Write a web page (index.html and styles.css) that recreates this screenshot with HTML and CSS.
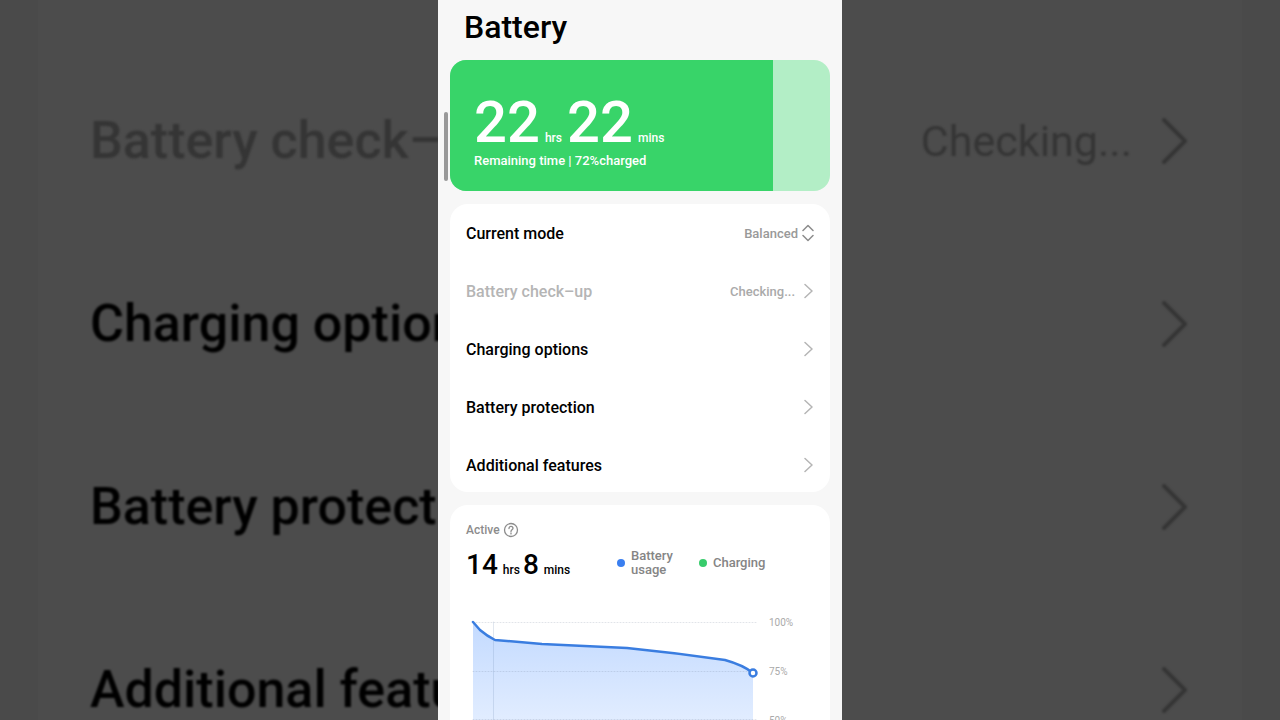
FILE: index.html
```html
<!DOCTYPE html>
<html lang="en">
<head>
<meta charset="utf-8">
<meta name="viewport" content="width=device-width, initial-scale=1">
<title>Battery</title>
<link rel="stylesheet" href="styles.css">
</head>
<body>
<div class="stage">
  <div class="backdrop backdrop-left" aria-hidden="true">
    <div class="backdrop-panel">
      <div class="backdrop-row faded">Battery check–up</div>
      <div class="backdrop-row">Charging options</div>
      <div class="backdrop-row">Battery protection</div>
      <div class="backdrop-row">Additional features</div>
    </div>
  </div>

  <main class="phone">
    <div class="scroll-thumb"></div>
    <h1 class="title">Battery</h1>

    <section class="charge">
      <div class="charge-fill">
        <p class="charge-time"><span class="big">22</span><span class="unit">hrs</span><span class="big">22</span><span class="unit">mins</span></p>
        <p class="charge-note">Remaining time | 72%charged</p>
      </div>
    </section>

    <section class="card settings">
      <div class="row">
        <label for="mode">Current mode</label>
        <span class="picker">
          <select id="mode" class="mode"><option>Balanced</option></select>
          <svg class="updown" viewBox="0 0 12 18"><path d="M1 6.500 6 1.500l5 5M1 11.500l5 5 5-5"/></svg>
        </span>
      </div>
      <button class="row disabled" type="button"><span>Battery check–up</span><span class="value">Checking...</span><svg class="chevron" viewBox="0 0 9 16"><path d="M1 1.500 8 8l-7 6.500"/></svg></button>
      <button class="row" type="button"><span>Charging options</span><svg class="chevron" viewBox="0 0 9 16"><path d="M1 1.500 8 8l-7 6.500"/></svg></button>
      <button class="row" type="button"><span>Battery protection</span><svg class="chevron" viewBox="0 0 9 16"><path d="M1 1.500 8 8l-7 6.500"/></svg></button>
      <button class="row" type="button"><span>Additional features</span><svg class="chevron" viewBox="0 0 9 16"><path d="M1 1.500 8 8l-7 6.500"/></svg></button>
    </section>

    <section class="card usage">
      <div class="active">
        <span>Active</span>
        <button class="help" type="button" aria-label="About active time">
          <svg viewBox="0 0 16 16"><circle cx="8" cy="8" r="6.500"/><path d="M6 6.500c0-1.300.9-2.100 2-2.100s2 .8 2 1.900c0 1.500-2 1.600-2 3.100M8 11v.9"/></svg>
        </button>
      </div>
      <div class="summary">
        <p class="active-time"><span class="number">14</span><span class="unit">hrs</span><span class="number">8</span><span class="unit">mins</span></p>
        <ul class="legend">
          <li><i class="dot blue"></i><span>Battery<br>usage</span></li>
          <li><i class="dot green"></i><span>Charging</span></li>
        </ul>
      </div>
      <div class="chart">
        <svg class="plot" viewBox="0 0 294 208" role="img" aria-label="Battery level over time">
          <defs>
            <linearGradient id="area" x1="0" y1="0" x2="0" y2="1">
              <stop offset="0" stop-color="#c3daff"/>
              <stop offset="1" stop-color="#fff"/>
            </linearGradient>
          </defs>
          <path fill="url(#area)" d="M6 6 13 14 20 19 28 24 75 28 160 32Q210 37 258 44 276 49 286 57V200H6z"/>
          <path class="grid" d="M6 6.500h285M6 55.500h285M6 103.500h285"/>
          <path class="divider" d="M26.500 6v194"/>
          <path class="line" d="M6 6 13 14Q20 20 28 24L75 28 160 32Q210 37 258 44 276 49 286 57"/>
          <circle class="point" cx="286" cy="57" r="3.500"/>
        </svg>
        <div class="scale"><span>100%</span><span>75%</span><span>50%</span></div>
      </div>
    </section>
  </main>

  <div class="backdrop backdrop-right" aria-hidden="true">
    <div class="backdrop-panel">
      <div class="backdrop-row faded"><span class="checking">Checking...</span><svg class="big-chevron" viewBox="0 0 26 46"><path d="M2 2 23 23 2 44"/></svg></div>
      <div class="backdrop-row"><svg class="big-chevron" viewBox="0 0 26 46"><path d="M2 2 23 23 2 44"/></svg></div>
      <div class="backdrop-row"><svg class="big-chevron" viewBox="0 0 26 46"><path d="M2 2 23 23 2 44"/></svg></div>
      <div class="backdrop-row"><svg class="big-chevron" viewBox="0 0 26 46"><path d="M2 2 23 23 2 44"/></svg></div>
    </div>
  </div>
</div>
</body>
</html>
```
FILE: styles.css
```css
* { box-sizing: border-box; }
body, h1, p, ul { margin: 0; padding: 0; }
body {
  font-family: Roboto, "Liberation Sans", sans-serif;
  font-weight: 500;
  color: #000;
  background: #4a4a4a;
}
button, select { font: inherit; color: inherit; background: none; border: 0; padding: 0; margin: 0; }
svg { display: block; fill: none; stroke-linecap: round; stroke-linejoin: round; }

.stage {
  display: grid;
  grid-template-columns: minmax(0, 1fr) 404px minmax(0, 1fr);
  height: 100vh;
  overflow: hidden;
}

/* Dimmed, enlarged copy of the list on both sides */
.backdrop { overflow: hidden; background: #4a4a4a; }
.backdrop-left { padding-left: 38px; }
.backdrop-right { padding-right: 38px; }
.backdrop-panel { background: #4c4c4c; padding-top: 49px; min-height: 100%; }
.backdrop-row {
  display: flex;
  align-items: center;
  height: 183px;
  font-size: 52px;
  white-space: nowrap;
  filter: blur(1px);
}
.backdrop-left .backdrop-row { padding-left: 52px; }
.backdrop-right .backdrop-row { justify-content: flex-end; padding-right: 54px; gap: 30px; }
.faded { color: #353535; }
.checking { font-size: 43px; font-weight: 400; }
.big-chevron { width: 26px; height: 46px; stroke: #353535; stroke-width: 4; }

.phone {
  position: relative;
  padding: 6px 12px 0;
  background: #f7f7f7;
  overflow: hidden;
}
.scroll-thumb {
  position: absolute;
  left: 6px;
  top: 112px;
  width: 4px;
  height: 69px;
  border-radius: 2px;
  background: #999;
}
.title { padding-left: 14px; font-size: 32px; line-height: 42px; font-weight: 500; }

.charge { margin-top: 12px; height: 131px; border-radius: 16px; overflow: hidden; background: #b3eec6; }
.charge-fill { width: 85%; height: 100%; padding: 32px 24px 0; background: #38d469; color: #fff; }
.charge-time { display: flex; align-items: baseline; line-height: 60px; }
.big { font-size: 58px; }
.charge .unit { font-size: 12px; line-height: 16px; margin: 0 5px; }
.charge-note { font-size: 13px; line-height: 18px; }

.card { margin-top: 13px; border-radius: 18px; background: #fff; }
.row {
  display: flex;
  align-items: center;
  width: 100%;
  height: 58px;
  padding: 0 16px;
  font-size: 16px;
  text-align: left;
}
.row > :first-child { flex: 1; }
button.row { padding-right: 17px; }
.disabled { color: #b5b5b5; }
.settings { height: 288px; }
.picker { display: flex; align-items: center; gap: 4px; }
.mode { appearance: none; font-size: 13px; color: #999; text-align: right; }
.value { font-size: 13px; color: #aaa; margin-right: 9px; }
.updown { width: 12px; height: 18px; stroke: #8c8c8c; stroke-width: 1.5; }
.chevron { width: 9px; height: 16px; stroke: #b5b5b5; stroke-width: 1.5; }

.usage { padding: 17px 16px 0; }
.active { display: flex; align-items: center; gap: 3px; font-size: 12px; line-height: 16px; color: #8c8c8c; }
.help svg { width: 16px; height: 16px; stroke: #8c8c8c; stroke-width: 1.3; }
.summary { display: flex; align-items: center; height: 49px; }
.active-time { display: flex; align-items: baseline; flex: 0 0 151px; padding-top: 5px; line-height: 36px; }
.number { font-size: 28px; }
.usage .unit { font-size: 12px; line-height: 14px; margin: 0 3px 0 5px; }
.legend { display: flex; align-items: center; gap: 26px; list-style: none; font-size: 13px; line-height: 14px; color: #858585; }
.legend li { display: flex; align-items: center; gap: 6px; }
.dot { width: 8px; height: 8px; border-radius: 50%; background: #3a7ff0; }
.green { background: #38cc6c; }
.chart { display: flex; gap: 8px; margin: 29px 0 0 1px; }
.plot { width: 294px; height: 208px; }
.grid { stroke: #6b7a90; stroke-opacity: .2; stroke-dasharray: 1 2; }
.divider { stroke: #6b86b0; stroke-opacity: .2; }
.line { stroke: #3a7de0; stroke-width: 2.5; }
.point { fill: #fff; stroke: #3a7de0; stroke-width: 2.5; }
.scale { display: flex; flex-direction: column; gap: 35px; font-size: 10px; line-height: 14px; font-weight: 400; color: #aaa; }
```
